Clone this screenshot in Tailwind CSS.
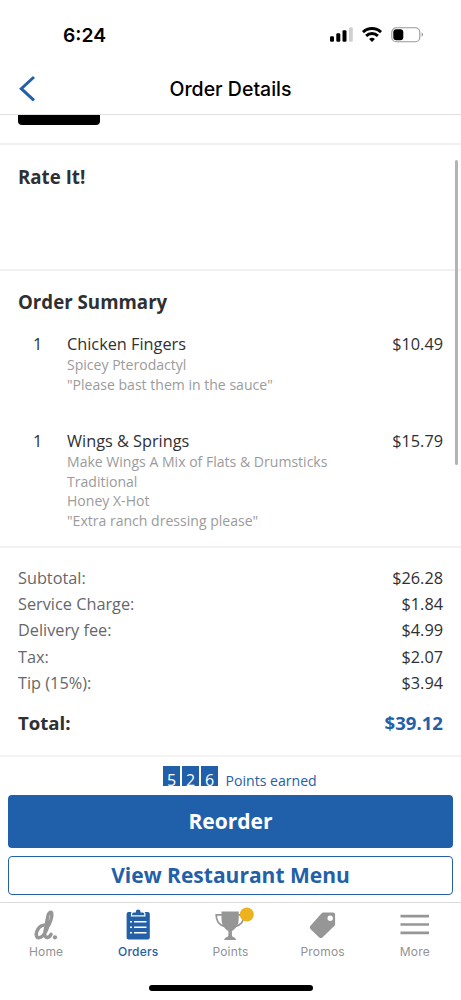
<!DOCTYPE html>
<html lang="en">
<head>
<meta charset="utf-8">
<title>Order Details</title>
<script src="https://cdn.jsdelivr.net/npm/@tailwindcss/browser@4"></script>
</head>
<body class="bg-white">
<div class="relative flex h-[1000px] w-[461px] flex-col overflow-hidden bg-white font-['Open_Sans','Noto_Sans',sans-serif] text-[#2f3032]">
  <!-- Status bar -->
  <div class="flex h-[62px] shrink-0 items-center justify-between pt-[8px] pr-[37px] pl-[63px] text-black">
    <span class="pt-px font-['Inter',sans-serif] text-[19.3px] font-semibold">6:24</span>
    <div class="flex items-center gap-[9px]">
      <svg width="23" height="16" viewBox="0 0 23 16"><rect x="0" y="9.3" width="4" height="5.4" rx="1.2"/><rect x="6.3" y="6.3" width="4" height="8.4" rx="1.2"/><rect x="12.5" y="3.3" width="4" height="11.4" rx="1.2"/><rect x="19" y="0.3" width="3.8" height="14.4" rx="1.2" fill="#cfcfcf"/></svg>
      <svg width="20" height="16" viewBox="0 0 20 16" fill="none" stroke="#000" stroke-width="2.9"><path d="M1 5.100a13.200 13.200 0 0 1 18 0"/><path d="M4.100 8.900a8.600 8.600 0 0 1 11.800 0"/><path d="M7.100 12a4.300 4.300 0 0 1 5.800 0L10 15z" fill="#000" stroke="none"/></svg>
      <svg width="33" height="16" viewBox="0 0 33 16"><rect x="0.8" y="0.7" width="28" height="14" rx="4.5" fill="none" stroke="#999" stroke-width="1.1"/><rect x="2.3" y="2.2" width="10" height="11" rx="3"/><path d="M30.600 5.600c2 .8 2 3.400 0 4.200z" fill="#999"/></svg>
    </div>
  </div>
  <!-- Title bar -->
  <div class="grid h-[53px] shrink-0 grid-cols-[80px_1fr_80px] items-center border-b border-[#dfdfe0]">
    <svg class="ml-[18px]" width="20" height="28" viewBox="0 0 20 28" fill="none" stroke="#2460a8" stroke-width="3"><path d="M16 3 3.300 14.700 16 26.400"/></svg>
    <h1 class="pt-[3px] text-center font-['Inter',sans-serif] text-[19.5px] font-medium text-black">Order Details</h1>
  </div>
  <!-- Scrolling content -->
  <main class="relative h-[672px] shrink-0 overflow-hidden">
    <div class="h-[30px] border-b-2 border-[#f1f1f1] pl-[18px]"><div class="h-[10px] w-[82px] rounded-b-[4px] bg-black"></div></div>
    <section class="h-[126px] border-b-2 border-[#f1f1f1] px-[18px] pt-[18.500px]"><h2 class="text-[18.700px] leading-[26px] font-bold">Rate It!</h2></section>
    <section class="h-[277px] border-b-2 border-[#f1f1f1] px-[18px] pt-[18px]">
      <h2 class="text-[18.700px] leading-[26px] font-bold">Order Summary</h2>
      <div class="mt-[15.500px] flex h-[97px]">
        <span class="w-[49px] pl-[15px] text-[16.300px] leading-[26px]">1</span>
        <div class="flex-1"><p class="text-[16.300px] leading-[26px]">Chicken Fingers</p>
          <div class="-mt-[1.500px] text-[14.050px] leading-[19.500px] text-[#9b9b9b]"><p>Spicey Pterodactyl</p><p>"Please bast them in the sauce"</p></div></div>
        <span class="text-[16.300px] leading-[26px]">$10.49</span>
      </div>
      <div class="flex">
        <span class="w-[49px] pl-[15px] text-[16.300px] leading-[26px]">1</span>
        <div class="flex-1"><p class="text-[16.300px] leading-[26px]">Wings &amp; Springs</p>
          <div class="-mt-[1.500px] text-[14.050px] leading-[19.500px] text-[#9b9b9b]"><p>Make Wings A Mix of Flats &amp; Drumsticks</p><p>Traditional</p><p>Honey X-Hot</p><p>"Extra ranch dressing please"</p></div></div>
        <span class="text-[16.300px] leading-[26px]">$15.79</span>
      </div>
    </section>
    <section class="h-[209px] border-b-2 border-[#f3f3f3] px-[18px] pt-[17px]">
      <dl class="text-[16.300px] leading-[26.200px] [&_dt]:text-[#66676a]">
        <div class="flex justify-between"><dt>Subtotal:</dt><dd>$26.28</dd></div>
        <div class="flex justify-between"><dt>Service Charge:</dt><dd>$1.84</dd></div>
        <div class="flex justify-between"><dt>Delivery fee:</dt><dd>$4.99</dd></div>
        <div class="flex justify-between"><dt>Tax:</dt><dd>$2.07</dd></div>
        <div class="flex justify-between"><dt>Tip (15%):</dt><dd>$3.94</dd></div>
      </dl>
      <div class="mt-[13.500px] flex justify-between text-[18.600px] leading-[26px] font-bold"><span>Total:</span><span class="text-[#2460a8]">$39.12</span></div>
    </section>
    <div class="flex pt-[9px] pl-[163px] text-[#2460a8]">
      <div class="flex h-[20px] gap-[2px] overflow-hidden text-center text-[16px] leading-[29px] text-white"><span class="h-[29px] w-[17px] bg-[#205faa]">5</span><span class="h-[29px] w-[17px] bg-[#205faa]">2</span><span class="h-[29px] w-[17px] bg-[#205faa]">6</span></div>
      <span class="ml-[7.500px] text-[14.100px] leading-[29px]">Points earned</span>
    </div>
    <div class="absolute top-[45px] right-[3px] h-[305px] w-[3px] rounded-full bg-[#b3b3b3]"></div>
  </main>
  <!-- Actions -->
  <div class="relative flex h-[115px] shrink-0 flex-col gap-[8px] bg-white px-[8px] pt-[8px]">
    <button class="h-[53px] rounded-[4px] bg-[#205faa] text-[21px] font-bold text-white">Reorder</button>
    <button class="h-[39px] rounded-[4px] border border-[#2460a8] bg-white text-[21px] font-bold text-[#2460a8]">View Restaurant Menu</button>
  </div>
  <!-- Tab bar -->
  <nav class="grid h-[98px] shrink-0 grid-cols-5 border-t border-[#dcdcdc] font-['Inter',sans-serif] text-[12px] leading-[16px] tracking-[0.200px] text-[#929394]">
    <div class="flex flex-col items-center pt-[3px]">
      <svg width="32" height="38" viewBox="0 0 32 38" fill="none" stroke="#969696" stroke-width="3.4" stroke-linecap="round" stroke-linejoin="round"><path d="M17.300 20.400C14 17.600 9 19.800 6.900 25.300c-1.800 4.800.4 7.700 3.700 6 3.100-1.600 5.700-6 7.200-10.900M17.500 21C20 17.600 22.600 10.300 21.700 6.900c-.8-1.900-3.100-.2-3.900 3.200L14.900 26c-.6 3.300.3 5.900 2.500 5.500 1.600-.3 3-1.800 3.700-3.300"/><circle cx="25" cy="31.300" r="2.100" fill="#969696" stroke="none"/></svg>
      <span>Home</span>
    </div>
    <div class="flex flex-col items-center pt-[3px] font-medium text-[#2460a8]">
      <svg width="32" height="38" viewBox="0 0 32 38"><rect x="4.600" y="6" width="23.200" height="27.500" rx="2" fill="#2460a8"/><path d="M9.500 9.800V8.200q0-2.200 2.300-2.200h1.400a3 3 0 0 1 6 0h1.400q2.300 0 2.300 2.200v1.600z" fill="#2460a8" stroke="#fff" stroke-width="1.200"/><path d="M8 15.800h2M8 21.200h2M8 26.700h2M12 15.800h12.500M12 21.200h12.500M12 26.700h12.500" stroke="#fff" stroke-width="1.600"/></svg>
      <span>Orders</span>
    </div>
    <div class="flex flex-col items-center pt-[3px]">
      <svg class="overflow-visible" width="32" height="38" viewBox="0 0 32 38"><path d="M7.500 5.500h17.200v7.200c0 6-2.800 10.200-6.800 12.300v4.200c0 2 4 2 4.200 4.800H10.200c.2-2.800 4.200-2.800 4.200-4.800V25c-4-2.100-6.900-6.300-6.900-12.300z" fill="#969696"/><path d="M8 8.800H2.200c0 6 2.600 10.300 8.400 11.500M24.200 8.800H30c0 6-2.600 10.300-8.400 11.500" fill="none" stroke="#969696" stroke-width="1.700"/><circle cx="32.800" cy="8.500" r="7" fill="#edb220"/></svg>
      <span>Points</span>
    </div>
    <div class="flex flex-col items-center pt-[3px]">
      <svg width="32" height="38" viewBox="0 0 32 38"><path fill="#969696" fill-rule="evenodd" d="M16.400 6.500h9.500q2.200 0 2.200 2.200v9.200q0 1.200-.9 2.100L15.700 31.200q-1.900 1.700-3.700 0L3.700 23.200q-1.900-1.900 0-3.700L14.400 7.400q.8-.9 2-.9zM23.200 9.500a2.700 2.700 0 1 0 0 5.400 2.700 2.700 0 0 0 0-5.400z"/></svg>
      <span>Promos</span>
    </div>
    <div class="flex flex-col items-center pt-[3px]">
      <svg width="32" height="38" viewBox="0 0 32 38" stroke="#969696" stroke-width="2.700"><path d="M1.500 10.200H30M1.500 18.500H30M1.500 26.800H30"/></svg>
      <span>More</span>
    </div>
  </nav>
  <div class="absolute bottom-[9.500px] left-[148.500px] h-[6px] w-[164px] rounded-full bg-black"></div>
</div>
</body>
</html>
